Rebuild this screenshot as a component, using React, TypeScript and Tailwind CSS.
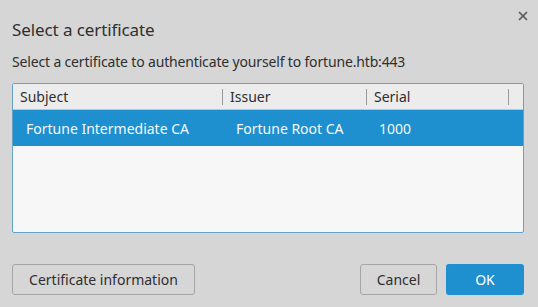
import { X } from "lucide-react";

const cols = [
  { label: "Subject", width: "w-[210px]" },
  { label: "Issuer", width: "w-[144px]" },
  { label: "Serial", width: "w-[142px]" },
];

export default function App() {
  return (
    <div className="relative flex h-[307px] w-[538px] flex-col bg-[#d6d6d6] px-3 text-[#2f2f2f] font-['Noto_Sans',sans-serif]">
      <button type="button" className="absolute right-[8px] top-[9px] text-[#5b5b5b]" aria-label="Close">
        <X className="h-[14px] w-[14px]" strokeWidth={3} />
      </button>

      <h1 className="mt-[19px] text-[17px] leading-[22px] tracking-[-0.1px]">Select a certificate</h1>
      <p className="mt-[11px] text-[14px] leading-[20px] tracking-[-0.16px]">
        Select a certificate to authenticate yourself to fortune.htb:443
      </p>

      <div className="mt-[11px] h-[150px] w-[512px] overflow-hidden rounded-[2px] border border-[#64a2c8] bg-[#f7f7f7]">
        <div className="flex h-[26px] items-center border-b border-[#c4c4c4] bg-[#ececec] text-[14px]">
          {cols.map((c) => (
            <div key={c.label} className={`${c.width} flex h-full items-center justify-between pl-[7px]`}>
              <span>{c.label}</span>
              <span className="h-[16px] w-px bg-[#9a9a9a]" />
            </div>
          ))}
        </div>
        <div className="flex h-[36px] items-center bg-[#1e8fcf] text-[14px] text-[#f4f9fc]">
          <div className="w-[210px] pl-[13px]">Fortune Intermediate CA</div>
          <div className="w-[144px] pl-[13px]">Fortune Root CA</div>
          <div className="w-[142px] pl-[12px]">1000</div>
        </div>
      </div>

      <div className="mt-[31px] flex w-[512px] items-center text-[14px]">
        <button type="button" className="h-[31px] w-[183px] rounded-[3px] border border-[#a5a5a5] bg-[#d6d6d6]">
          Certificate information
        </button>
        <div className="ml-auto flex gap-[9px]">
          <button type="button" className="h-[31px] w-[77px] rounded-[3px] border border-[#a5a5a5] bg-[#d6d6d6]">
            Cancel
          </button>
          <button type="button" className="h-[31px] w-[78px] rounded-[3px] bg-[#1e8fcf] text-white">
            OK
          </button>
        </div>
      </div>
    </div>
  );
}
